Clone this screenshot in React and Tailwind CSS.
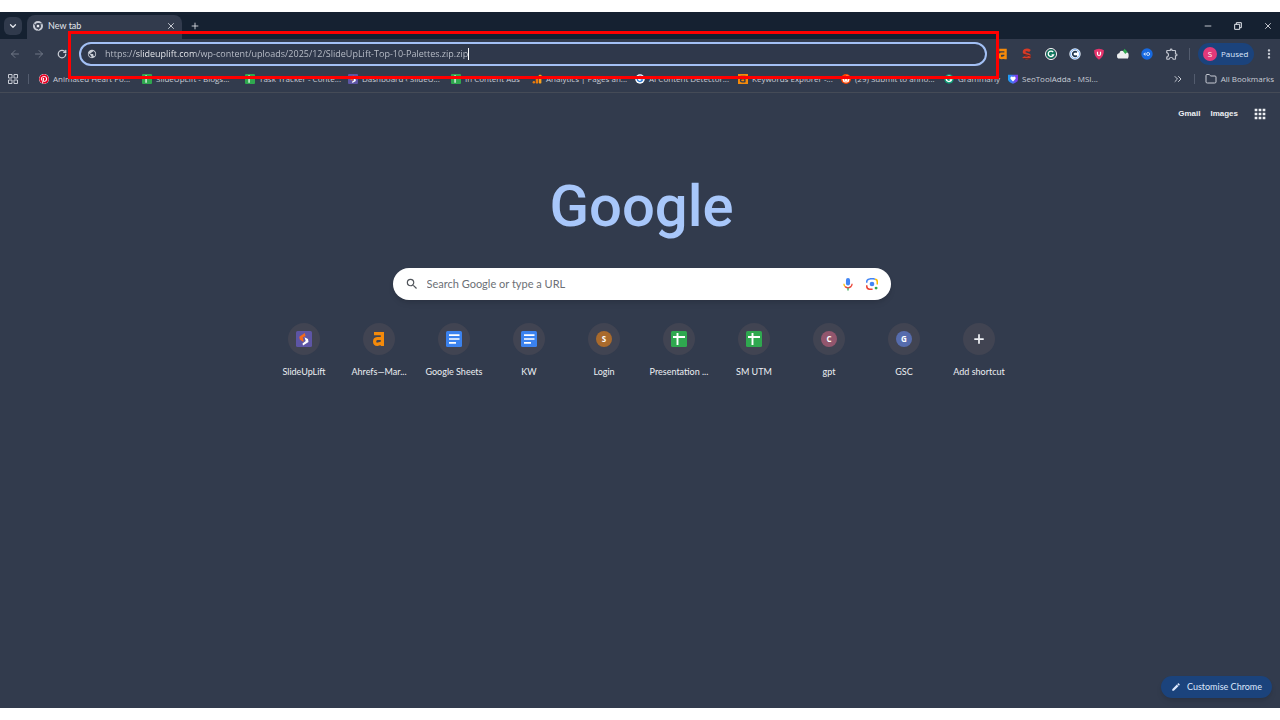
import {
	ArrowLeft,
	ArrowRight,
	ChevronDown,
	ChevronsRight,
	Folder,
	Minus,
	Plus,
	RotateCw,
	X,
} from "lucide-react";
import { FaPinterest, FaRedditAlien } from "react-icons/fa";
import { MdApps, MdEdit, MdMoreVert, MdOutlineExtension, MdPublic, MdSearch } from "react-icons/md";

function ChromeIcon() {
	return (
		<svg viewBox="0 0 24 24" className="size-2.5" fill="none" stroke="#c9cdd6">
			<circle cx="12" cy="12" r="9.500" strokeWidth="5" />
			<path d="M12 6.500h10M7.500 14.500 2.500 6M16.500 14.500 11.500 23" stroke="#323b4d" strokeWidth="1.800" />
			<circle cx="12" cy="12" r="4.500" fill="#e8eaf0" stroke="#323b4d" strokeWidth="2" />
		</svg>
	);
}

function GridIcon() {
	return (
		<svg viewBox="0 0 20 20" className="size-2.5" fill="none" stroke="currentColor" strokeWidth="2">
			<path d="M1 1h7v7H1ZM12 1h7v7h-7ZM1 12h7v7H1ZM12 12h7v7h-7Z" />
		</svg>
	);
}

function SheetIcon({ className }) {
	return (
		<svg viewBox="0 0 16 16" className={className}>
			<rect width="16" height="16" rx="1.5" fill="#2fa84f" />
			<path d="M2 6h12M6.500 2v12" stroke="#fff" strokeWidth="1.900" />
		</svg>
	);
}

function DocIcon() {
	return (
		<svg viewBox="0 0 16 16" className="size-4">
			<rect width="16" height="16" rx="1.5" fill="#3b82ee" />
			<path d="M3 4.200h10.500M3 8h10.500M3 11.800h7" stroke="#fff" strokeWidth="1.700" />
		</svg>
	);
}

function SlideIcon({ className }) {
	return (
		<svg viewBox="0 0 16 16" className={className}>
			<rect width="16" height="16" rx="1.5" fill="#5d55a5" />
			<path d="M8.800 2 3.300 5.800 3.800 8.500 7.500 11 7.200 7.500 6.700 6.600 9.500 5Z" fill="#f26b1d" />
			<path d="M8.500 6.200 12 8 12.500 11 7 14.500 6.500 12.500 9.700 10Z" fill="#fff" />
		</svg>
	);
}

function AhrefsIcon({ className }) {
	return (
		<svg viewBox="0 0 16 16" className={className} fill="none" stroke="#f58a0a" strokeWidth="3.200">
			<path d="M3 2.700h8.400v12.300M11 7.500H6.200Q3.600 7.700 3.600 10.500T6.400 13.400L11 12" />
		</svg>
	);
}

function AhrefsTile() {
	return (
		<svg viewBox="0 0 16 16" className="size-2.5">
			<rect width="16" height="16" fill="#f58a0a" />
			<path d="M4 4h7v9M11 7.500H6.500a2 2 0 0 0 0 5H11" fill="none" stroke="#323b4d" strokeWidth="2.200" />
		</svg>
	);
}

function ChartIcon() {
	return (
		<svg viewBox="0 0 16 16" className="size-2.5" fill="#f9a11b">
			<rect x="11" y="1" width="4" height="14" rx="1" />
			<rect x="6" y="6" width="4" height="9" rx="1" fill="#ea7a0c" />
			<circle cx="3" cy="13" r="2" fill="#ea7a0c" />
		</svg>
	);
}

// round badge with an open ring, used by several extensions
function RingIcon({ className, fill, ring }) {
	return (
		<svg viewBox="0 0 16 16" className={className}>
			<circle cx="8" cy="8" r="7.6" fill={fill} />
			<path d="M11.500 5A4.400 4.400 0 1 0 12 9.500H9" fill="none" stroke={ring} strokeWidth="2" />
		</svg>
	);
}

function CopyIcon() {
	return (
		<svg viewBox="0 0 16 16" className="size-3">
			<circle cx="8" cy="8" r="7.6" fill="#e4effc" />
			<circle cx="8" cy="8" r="6" fill="#fff" stroke="#5b9cf0" />
			<path d="M10.500 5.800A3.200 3.200 0 1 0 10.500 10.200" fill="none" stroke="#1d3550" strokeWidth="2.200" />
		</svg>
	);
}

function SeoIcon() {
	return (
		<svg viewBox="0 0 16 16" className="size-3">
			<path d="M12 4Q9.500 2 6.500 2.600T4.300 6.500Q5.500 8 8.500 8.500T11.300 11.500Q9.500 14 6.500 13.300T3 12" fill="none" stroke="#d93a26" strokeWidth="3.600" />
			<path d="M2.500 8l11 3M3 14l10 .5" stroke="#5c2723" strokeWidth="1.500" />
		</svg>
	);
}

function ShieldIcon() {
	return (
		<svg viewBox="0 0 16 16" className="size-3">
			<path d="M8 1Q12 1 14.500 3 15 11 8 15.500 1 11 1.500 3 4 1 8 1Z" fill="#e5336c" />
			<path d="M6 5v3a2 2 0 0 0 4 0V5" fill="none" stroke="#fff" strokeWidth="1.600" />
		</svg>
	);
}

function CloudIcon() {
	return (
		<svg viewBox="0 0 16 16" className="size-3">
			<path d="M3 14Q0 14 0 10.500T3 7q1-4 5-3l6 2q2 1 1.500 5T13 14Z" fill="#eef0f1" />
			<path d="M10 1l4 4-3 3-3-4Z" fill="#2fa84f" />
		</svg>
	);
}

function BlueIcon() {
	return (
		<svg viewBox="0 0 16 16" className="size-3">
			<circle cx="8" cy="8" r="7.600" fill="#1769e0" />
			<path d="M3 8l3-2.500v5Z" fill="#cfe0fb" />
			<circle cx="9.500" cy="8" r="2" fill="none" stroke="#cfe0fb" strokeWidth="1.300" />
		</svg>
	);
}

function HeartIcon() {
	return (
		<svg viewBox="0 0 16 16" className="size-2.5">
			<defs>
				<linearGradient id="heartShield">
					<stop stopColor="#16a5f5" />
					<stop offset="1" stopColor="#8a2ff0" />
				</linearGradient>
			</defs>
			<path d="M0 1h16v8q-1 4-8 6.500Q1 13 0 9Z" fill="url(#heartShield)" />
			<path d="M8 12 3.800 7.500Q3.500 4 6 4q1.500 0 2 1.300Q8.500 4 10 4q2.500 0 2.200 3.500Z" fill="#fff" />
		</svg>
	);
}

function MicIcon() {
	return (
		<svg viewBox="0 0 24 24" className="size-3.5" fill="none" strokeWidth="2.200">
			<rect x="8.500" y="1.500" width="7" height="13" rx="3.500" fill="#4285f4" />
			<path d="M5 11.500q0 3 2 5" stroke="#fbbc04" />
			<path d="M7 16.500q5 4 10 0 2-2 2-5" stroke="#ea4335" />
			<path d="M12 18.500V23" stroke="#34a853" />
		</svg>
	);
}

function LensIcon() {
	return (
		<svg viewBox="0 0 24 24" className="size-3.5" fill="none" strokeWidth="2.600">
			<path d="M3 10V8q0-4 4-4" stroke="#4285f4" />
			<path d="M7 4l2-1h6l2 1" stroke="#4285f4" />
			<path d="M17 4q4 0 4 4v5" stroke="#fbbc04" />
			<path d="M3 14v2q0 5 5 5h5" stroke="#ea4335" />
			<circle cx="12" cy="12" r="4" fill="#4285f4" />
			<circle cx="19" cy="19" r="2.500" fill="#34a853" />
		</svg>
	);
}

function RestoreIcon() {
	return (
		<svg viewBox="0 0 12 12" className="size-2.5" fill="none" stroke="currentColor">
			<path d="M2 4h6v6H2ZM4 4V2h6v6H8" strokeWidth="1.200" />
		</svg>
	);
}

function Letter({ className, children }) {
	return (
		<span className={`flex size-4 items-center justify-center rounded-full text-[8px] font-bold text-white ${className}`}>
			{children}
		</span>
	);
}

const bookmarks = [
	{ name: "Animated Heart Po...", icon: <FaPinterest className="size-2.5 rounded-full bg-white text-[#e60023]" /> },
	{ name: "SlideUpLift - Blogs...", icon: <SheetIcon className="size-2.5" /> },
	{ name: "Task Tracker - Conte...", icon: <SheetIcon className="size-2.5" /> },
	{ name: "Dashboard ‹ SlideU...", icon: <SlideIcon className="size-2.5" /> },
	{ name: "In Content Ads", icon: <SheetIcon className="size-2.5" />, width: "w-[53px]" },
	{ name: "Analytics | Pages an...", icon: <ChartIcon /> },
	{ name: "AI Content Detector...", icon: <RingIcon className="size-2.5" fill="#fff" ring="#2f7fd8" /> },
	{ name: "Keywords Explorer -...", icon: <AhrefsTile /> },
	{ name: "(29) Submit to anno...", icon: <FaRedditAlien className="size-2.5 rounded-full bg-[#ff4500] p-px text-white" /> },
	{ name: "Grammarly", icon: <RingIcon className="size-2.5" fill="#0f9d77" ring="#fff" />, width: "w-9" },
	{ name: "SeoToolAdda - MSI...", icon: <HeartIcon /> },
];

const extensions = [
	{ name: "Ahrefs", icon: <AhrefsIcon className="size-3" /> },
	{ name: "SEO", icon: <SeoIcon /> },
	{ name: "Grammar", icon: <RingIcon className="size-3 rounded-full border border-white" fill="#11795f" ring="#fff" /> },
	{ name: "Copy", icon: <CopyIcon /> },
	{ name: "Shield", icon: <ShieldIcon /> },
	{ name: "Cloud", icon: <CloudIcon /> },
	{ name: "Tags", icon: <BlueIcon /> },
	{ name: "Extensions", icon: <MdOutlineExtension className="size-3.5 text-[#c3c7d0]" /> },
];

const shortcuts = [
	{ name: "SlideUpLift", icon: <SlideIcon className="size-4" /> },
	{ name: "Ahrefs—Mar...", icon: <AhrefsIcon className="size-4" /> },
	{ name: "Google Sheets", icon: <DocIcon /> },
	{ name: "KW", icon: <DocIcon /> },
	{ name: "Login", icon: <Letter className="bg-[#a96a2c]">S</Letter> },
	{ name: "Presentation ...", icon: <SheetIcon className="size-4" /> },
	{ name: "SM UTM", icon: <SheetIcon className="size-4" /> },
	{ name: "gpt", icon: <Letter className="bg-[#92566d]">C</Letter> },
	{ name: "GSC", icon: <Letter className="bg-[#566cad]">G</Letter> },
];

function TabStrip() {
	return (
		<div className="flex h-[27px] items-center bg-[#152131] text-[#e3e6ec]">
			<button aria-label="Search tabs" className="ml-1 flex h-[18px] w-[18px] items-center justify-center rounded-md bg-[#303a4c]">
				<ChevronDown className="size-2.5" strokeWidth={3} />
			</button>
			<div className="ml-[5px] flex h-6 w-[155px] items-center self-end rounded-t-lg bg-[#323b4d] px-1.5 pb-0.5">
				<ChromeIcon />
				<span className="ml-[5px] flex-1 font-['Lato',sans-serif] text-[9px]">New tab</span>
				<button aria-label="Close tab">
					<X className="size-2.5" strokeWidth={2} />
				</button>
			</div>
			<button aria-label="New tab" className="ml-2">
				<Plus className="size-2.5" strokeWidth={2} />
			</button>
			<div className="ml-auto flex items-center gap-5 pr-[7px]">
				<button aria-label="Minimise"><Minus className="size-2.5" /></button>
				<button aria-label="Restore"><RestoreIcon /></button>
				<button aria-label="Close window"><X className="size-2.5" /></button>
			</div>
		</div>
	);
}

function Toolbar() {
	return (
		<div className="flex h-[30px] items-center text-[#c9cdd6]">
			<div className="flex w-[79px] shrink-0 items-center gap-3 pl-[9px]">
				<button aria-label="Back" className="text-[#6f7786]"><ArrowLeft className="size-3" /></button>
				<button aria-label="Forward" className="text-[#6f7786]"><ArrowRight className="size-3" /></button>
				<button aria-label="Reload"><RotateCw className="size-2.5" strokeWidth={3} /></button>
			</div>
			<div className="relative flex h-6 min-w-0 flex-1 items-center rounded-full border-2 border-[#a3c0f5] bg-[#2f384b] px-1.5">
				<MdPublic className="size-2.5 shrink-0" />
				<input
					aria-label="Address"
					defaultValue="https://slideuplift.com/wp-content/uploads/2025/12/SlideUpLift-Top-10-Palettes.zip.zip"
					className="ml-2 field-sizing-content bg-[linear-gradient(90deg,#c0c5cf_30px,#f4f5f8_30px,#f4f5f8_90px,#c0c5cf_90px)] bg-clip-text text-[9px] text-transparent outline-none" />
				<span className="h-3 w-px bg-white"></span>
				<div className="pointer-events-none absolute -top-[13px] -right-[14px] -bottom-[15px] -left-[13px] z-10 border-3 border-[#ff0000]"></div>
			</div>
			<div className="ml-2.5 flex items-center gap-3">
				{extensions.map((item) => (
					<button key={item.name} aria-label={item.name}>{item.icon}</button>
				))}
			</div>
			<span className="ml-2.5 h-3 w-px bg-[#535c6e]"></span>
			<button className="ml-2 flex h-[22px] w-14 items-center gap-1 rounded-full bg-[#1b437c] pl-[5px] text-[8px] text-[#dbe7fd]">
				<span className="flex size-3.5 items-center justify-center rounded-full bg-[#e2397a] text-white">S</span>
				Paused
			</button>
			<button aria-label="Menu" className="mr-1 ml-2"><MdMoreVert className="size-3.5" /></button>
		</div>
	);
}

function BookmarksBar() {
	return (
		<div className="flex h-6 items-center border-b border-[#454b57] pr-1.5 pb-1 pl-2 text-[8px] text-[#c9cdd6]">
			<button aria-label="Apps"><GridIcon /></button>
			<span className="ml-2.5 h-2.5 w-px bg-[#535c6e]"></span>
			<nav className="ml-2.5 flex items-center gap-3.5">
				{bookmarks.map((item) => (
					<a key={item.name} href="#" className="flex items-center gap-1 whitespace-nowrap">
						{item.icon}
						<span className={item.width || "w-[75px]"}>{item.name}</span>
					</a>
				))}
			</nav>
			<button aria-label="More bookmarks" className="ml-auto"><ChevronsRight className="size-3" /></button>
			<span className="ml-2.5 h-2.5 w-px bg-[#535c6e]"></span>
			<a href="#" className="ml-2.5 flex items-center gap-1 whitespace-nowrap">
				<Folder className="size-3" />
				All Bookmarks
			</a>
		</div>
	);
}

function Shortcut({ name, children }) {
	return (
		<a href="#" className="flex w-[75px] flex-col items-center gap-[11px]">
			<span className="flex size-8 items-center justify-center rounded-full bg-[#414452]">{children}</span>
			<span className="font-['Lato',sans-serif] text-[9px] leading-3 whitespace-nowrap">{name}</span>
		</a>
	);
}

export default function App() {
	return (
		<div className="flex min-h-screen flex-col bg-white py-3 font-['Open_Sans','Noto_Sans',sans-serif]">
			<div className="flex flex-1 flex-col bg-[#323b4d]">
				<header>
					<TabStrip />
					<Toolbar />
					<BookmarksBar />
				</header>
				<main className="flex flex-1 flex-col items-center pl-[3px] text-[#edeff3]">
					<div className="flex w-full items-center justify-end gap-2.5 pt-[13px] pr-3 font-['Liberation_Sans',sans-serif] text-[8px] leading-4 font-bold">
						<a href="#">Gmail</a>
						<a href="#">Images</a>
						<button aria-label="Google apps" className="ml-1"><MdApps className="size-4" /></button>
					</div>
					<h1 className="mt-12 font-['Roboto',sans-serif] text-[58px] leading-[72px] font-medium text-[#a8c7fa]">Google</h1>
					<label className="mt-[26px] flex h-8 w-[498px] items-center rounded-full bg-white px-3 shadow-md">
						<MdSearch className="size-3.5 text-[#50545a]" />
						<input
							type="text"
							placeholder="Search Google or type a URL"
							className="ml-2 flex-1 font-['Lato',sans-serif] text-[11px] text-gray-700 outline-none placeholder:text-[#6b6f75]" />
						<button aria-label="Search by voice"><MicIcon /></button>
						<button aria-label="Search by image" className="ml-2.5"><LensIcon /></button>
					</label>
					<div className="mt-[23px] flex">
						{shortcuts.map((item) => (
							<Shortcut key={item.name} name={item.name}>{item.icon}</Shortcut>
						))}
						<Shortcut name="Add shortcut"><Plus className="size-3.5" strokeWidth={3} /></Shortcut>
					</div>
					<button className="mt-auto mr-2 mb-2.5 flex h-[22px] items-center gap-1.5 self-end rounded-full bg-[#1b437c] px-2.5 font-['Lato',sans-serif] text-[9px] text-[#dbe7fd] shadow-md">
						<MdEdit className="size-2.5" />
						Customise Chrome
					</button>
				</main>
			</div>
		</div>
	);
}
